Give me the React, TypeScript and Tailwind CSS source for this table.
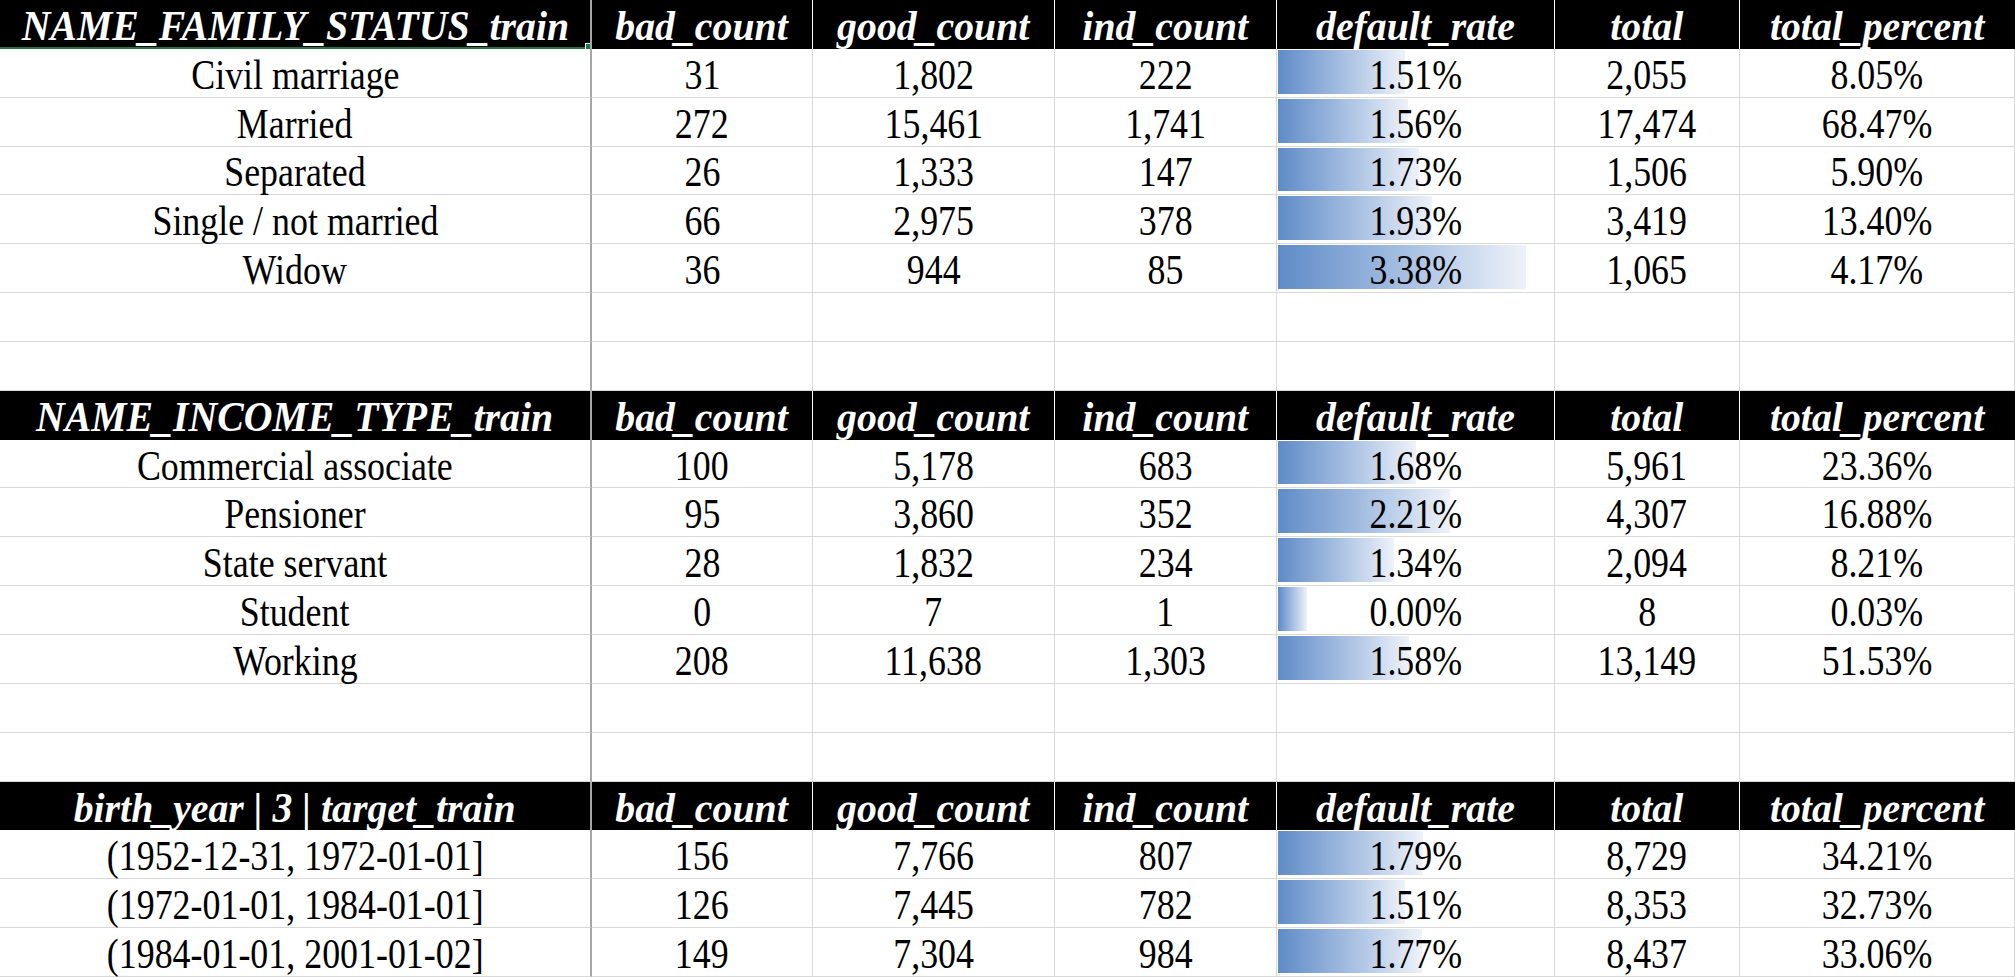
import React from 'react';

type Row =
  | { kind: 'header'; label: string }
  | { kind: 'data'; cells: string[]; rate: number }
  | { kind: 'blank' };

const COLS = ['bad_count', 'good_count', 'ind_count', 'default_rate', 'total', 'total_percent'];

const rows: Row[] = [
  { kind: 'header', label: 'NAME_FAMILY_STATUS_train' },
  { kind: 'data', cells: ['Civil marriage', '31', '1,802', '222', '1.51%', '2,055', '8.05%'], rate: 1.51 },
  { kind: 'data', cells: ['Married', '272', '15,461', '1,741', '1.56%', '17,474', '68.47%'], rate: 1.56 },
  { kind: 'data', cells: ['Separated', '26', '1,333', '147', '1.73%', '1,506', '5.90%'], rate: 1.73 },
  { kind: 'data', cells: ['Single / not married', '66', '2,975', '378', '1.93%', '3,419', '13.40%'], rate: 1.93 },
  { kind: 'data', cells: ['Widow', '36', '944', '85', '3.38%', '1,065', '4.17%'], rate: 3.38 },
  { kind: 'blank' },
  { kind: 'blank' },
  { kind: 'header', label: 'NAME_INCOME_TYPE_train' },
  { kind: 'data', cells: ['Commercial associate', '100', '5,178', '683', '1.68%', '5,961', '23.36%'], rate: 1.68 },
  { kind: 'data', cells: ['Pensioner', '95', '3,860', '352', '2.21%', '4,307', '16.88%'], rate: 2.21 },
  { kind: 'data', cells: ['State servant', '28', '1,832', '234', '1.34%', '2,094', '8.21%'], rate: 1.34 },
  { kind: 'data', cells: ['Student', '0', '7', '1', '0.00%', '8', '0.03%'], rate: 0 },
  { kind: 'data', cells: ['Working', '208', '11,638', '1,303', '1.58%', '13,149', '51.53%'], rate: 1.58 },
  { kind: 'blank' },
  { kind: 'blank' },
  { kind: 'header', label: 'birth_year | 3 | target_train' },
  { kind: 'data', cells: ['(1952-12-31, 1972-01-01]', '156', '7,766', '807', '1.79%', '8,729', '34.21%'], rate: 1.79 },
  { kind: 'data', cells: ['(1972-01-01, 1984-01-01]', '126', '7,445', '782', '1.51%', '8,353', '32.73%'], rate: 1.51 },
  { kind: 'data', cells: ['(1984-01-01, 2001-01-02]', '149', '7,304', '984', '1.77%', '8,437', '33.06%'], rate: 1.77 },
];

// header label: bold italic white, a little taller than wide (Excel zoom look)
const headText = 'text-white italic font-bold text-[39px] leading-none whitespace-nowrap mt-[3px] scale-x-[1.02] scale-y-[1.1]';
const bodyText = 'relative text-black text-[37px] leading-none whitespace-nowrap mt-[3px] scale-x-[0.97] scale-y-[1.12]';

function HeaderRow({ label, first }: { label: string; first: boolean }) {
  return (
    <>
      <div className="relative bg-black border-r-2 border-r-[#a6a6a6] flex items-center justify-center overflow-hidden">
        <span className={headText}>{label}</span>
        {first && (
          <>
            <div className="absolute left-0 right-0 bottom-0 h-[2px] bg-[#217346]" />
            <div className="absolute right-[-2px] bottom-[-1px] w-[7px] h-[7px] bg-[#217346] border border-white" />
          </>
        )}
      </div>
      {COLS.map((c, i) => (
        <div
          key={c}
          className={`bg-black flex items-center justify-center overflow-hidden ${i < COLS.length - 1 ? 'border-r border-r-white' : ''}`}
        >
          <span className={headText}>{c}</span>
        </div>
      ))}
    </>
  );
}

function DataRow({ cells, rate }: { cells: string[]; rate: number }) {
  return (
    <>
      {cells.map((text, i) => (
        <div
          key={i}
          className={`relative flex items-center justify-center border-b border-b-[#d9d9d9] ${
            i === 0 ? 'border-r-2 border-r-[#a6a6a6]' : 'border-r border-r-[#d9d9d9]'
          }`}
        >
          {i === 4 && (
            <div
              className="absolute left-[1px] top-[1px] bottom-[3px] bg-gradient-to-r from-[#5f8bc7] to-[#eef2f9]"
              style={{ width: 29 + 64.8 * rate }}
            />
          )}
          <span className={bodyText}>{text}</span>
        </div>
      ))}
    </>
  );
}

function BlankRow() {
  return (
    <>
      {Array.from({ length: 7 }).map((_, i) => (
        <div
          key={i}
          className={`border-b border-b-[#d9d9d9] ${i === 0 ? 'border-r-2 border-r-[#a6a6a6]' : 'border-r border-r-[#d9d9d9]'}`}
        />
      ))}
    </>
  );
}

export default function App() {
  let headerCount = 0;
  return (
    <div className="w-[2015px] h-[977px] overflow-hidden bg-white" style={{ fontFamily: '"Liberation Serif", "Times New Roman", serif' }}>
      <div className="grid grid-cols-[592px_221px_242px_222px_278px_185px_275px] auto-rows-[48.85px]">
        {rows.map((r, idx) => {
          if (r.kind === 'header') {
            const first = headerCount === 0;
            headerCount++;
            return <HeaderRow key={idx} label={r.label} first={first} />;
          }
          if (r.kind === 'data') return <DataRow key={idx} cells={r.cells} rate={r.rate} />;
          return <BlankRow key={idx} />;
        })}
      </div>
    </div>
  );
}
